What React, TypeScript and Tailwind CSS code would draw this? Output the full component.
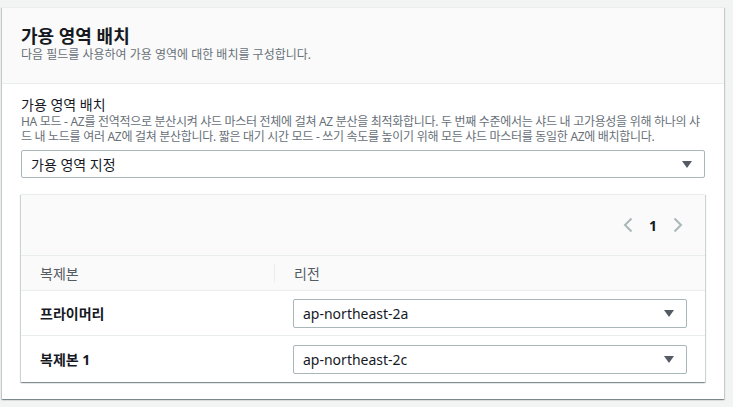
import React from "react";

const font = { fontFamily: '"Noto Sans", "Noto Sans CJK KR", sans-serif' };

const Caret = () => (
  <svg width="10" height="7" viewBox="0 0 10 7" className="shrink-0">
    <path d="M0 0h10L5 7z" fill="#545b64" />
  </svg>
);

const SelectBox = ({ value, className = "" }: { value: string; className?: string }) => (
  <div
    className={`flex items-center justify-between rounded-[2px] border border-[#aab7b8] bg-white pl-[9px] pr-[12px] text-[14px] text-[#16191f] ${className}`}
  >
    <span>{value}</span>
    <Caret />
  </div>
);

const rows = [
  { name: "프라이머리", region: "ap-northeast-2a" },
  { name: "복제본 1", region: "ap-northeast-2c" },
];

export default function App() {
  return (
    <div className="min-h-[407px] bg-[#f2f3f3] pl-[2px] pr-[9px] pt-[7px]" style={font}>
      <div className="border-t border-[#eaeded] bg-white shadow-[0_1px_1px_0_rgba(0,28,36,0.3),1px_1px_1px_0_rgba(0,28,36,0.15),-1px_1px_1px_0_rgba(0,28,36,0.15)]">
        {/* 헤더 */}
        <div className="border-b border-[#eaeded] bg-[#fafafa] px-[19px] pb-[20px] pt-[17px]">
          <h2 className="text-[18px] font-bold leading-[22px] text-[#16191f]">가용 영역 배치</h2>
          <p className="text-[12px] leading-[16px] text-[#687078]">
            다음 필드를 사용하여 가용 영역에 대한 배치를 구성합니다.
          </p>
        </div>

        {/* 본문 */}
        <div className="px-[19px] pb-[17px] pt-[12px]">
          <div className="text-[14px] leading-[18px] text-[#16191f]">가용 영역 배치</div>
          <p className="break-all text-[12px] leading-[15px] tracking-[-0.3px] text-[#687078]">
            HA 모드 - AZ를 전역적으로 분산시켜 샤드 마스터 전체에 걸쳐 AZ 분산을 최적화합니다. 두 번째 수준에서는 샤드 내 고가용성을 위해 하나의 샤드 내 노드를 여러 AZ에 걸쳐 분산합니다. 짧은 대기 시간 모드 - 쓰기 속도를 높이기 위해 모든 샤드 마스터를 동일한 AZ에 배치합니다.
          </p>
          <SelectBox value="가용 영역 지정" className="mt-[6px] h-[28px]" />

          <div className="mt-[16px] border-t border-[#eaeded] bg-white shadow-[0_1px_1px_0_rgba(0,28,36,0.3),1px_1px_1px_0_rgba(0,28,36,0.15),-1px_1px_1px_0_rgba(0,28,36,0.15)]">
            <div className="flex h-[61px] items-center justify-end border-b border-[#eaeded] bg-[#fafafa] pr-[22px]">
              <div className="flex items-center gap-[16px]">
                <svg width="10" height="16" viewBox="0 0 10 16">
                  <path d="M8.5 1.5 2 8l6.5 6.5" fill="none" stroke="#aab7b8" strokeWidth="2" />
                </svg>
                <span className="text-[14px] font-bold text-[#16191f]">1</span>
                <svg width="10" height="16" viewBox="0 0 10 16">
                  <path d="M1.5 1.5 8 8l-6.5 6.5" fill="none" stroke="#aab7b8" strokeWidth="2" />
                </svg>
              </div>
            </div>
            <div className="grid grid-cols-[253px_1fr] border-b border-[#eaeded] bg-[#fafafa] text-[14px] text-[#545b64]">
              <div className="flex h-[34px] items-center pl-[19px]">복제본</div>
              <div className="flex h-[34px] items-center">
                <span className="h-[19px] w-px bg-[#eaeded]" />
                <span className="pl-[19px]">리전</span>
              </div>
            </div>
            {rows.map((r, i) => (
              <div
                key={r.name}
                className={`grid grid-cols-[253px_1fr] items-center text-[14px] ${
                  i < rows.length - 1 ? "h-[45px] border-b border-[#eaeded]" : "h-[46px]"
                }`}
              >
                <div className="pl-[19px] font-bold text-[#16191f]">{r.name}</div>
                <div className="pl-[19px] pr-[18px]">
                  <SelectBox value={r.region} className="h-[29px]" />
                </div>
              </div>
            ))}
          </div>
        </div>
      </div>
    </div>
  );
}
